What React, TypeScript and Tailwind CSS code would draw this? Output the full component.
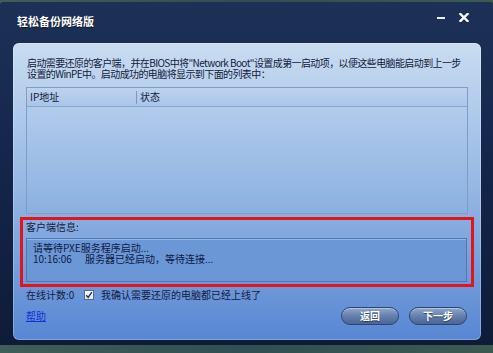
import React from "react";

const font = { fontFamily: '"Noto Sans CJK SC", "Noto Sans", sans-serif' };

function Btn({ children }: { children: React.ReactNode }) {
  return (
    <div className="w-[58px] h-[18px] rounded-full border border-[#2b4472] bg-gradient-to-b from-[#90a7cc] via-[#6580ae] to-[#4a6596] shadow-[inset_0_1px_0_rgba(255,255,255,0.35)] flex items-center justify-center text-white text-[10px] font-bold leading-none [text-shadow:0_1px_1px_rgba(0,0,0,0.5)]">
      {children}
    </div>
  );
}

export default function App() {
  return (
    <div className="w-[493px] h-[353px] overflow-hidden bg-gradient-to-r from-[#3f5e58] via-[#2f4f52] to-[#3c5a50] pt-[2px]" style={font}>
      <div className="h-[343px] rounded-t-[3px] bg-gradient-to-b from-[#1d3156] via-[#14254a] to-[#0f1c38] flex flex-col pl-[13px] pr-[12px] pb-[5px]">
        {/* title bar */}
        <div className="h-[41px] flex justify-between items-start shrink-0">
          <div className="pl-[4px] pt-[12px] text-white text-[11px] font-bold leading-[14px] [text-shadow:0_1px_1px_rgba(0,0,0,0.6)]">
            轻松备份网络版
          </div>
          <div className="flex items-center gap-[14px] pt-[11px] pr-[12px]">
            <div className="w-[8px] h-[2px] bg-[#e8eef8]" />
            <svg width="10" height="9" viewBox="0 0 10 9">
              <path d="M1.5 1 L8.5 8 M8.5 1 L1.5 8" stroke="#ffffff" strokeWidth="2.4" strokeLinecap="square" />
            </svg>
          </div>
        </div>
        {/* panel */}
        <div className="flex-1 rounded-[6px] bg-gradient-to-b from-[#c9dcf1] via-[#93b6e3] to-[#5886d3] px-[13px] pt-[14px] flex flex-col shadow-[inset_0_0_0_1px_rgba(255,255,255,0.25)]">
          <div className="pl-[1px] text-[10px] leading-[11px] text-[#15203a] whitespace-nowrap tracking-[-0.6px]">
            <div>启动需要还原的客户端，并在BIOS中将"Network Boot"设置成第一启动项，以便这些电脑能启动到上一步</div>
            <div>设置的WinPE中。启动成功的电脑将显示到下面的列表中：</div>
          </div>
          {/* list */}
          <div className="mt-[8px] h-[127px] border border-[#7e9cc4] flex flex-col shrink-0">
            <div className="h-[19px] flex items-center border-b border-[#86a5cf] bg-gradient-to-b from-[#bcd3ee] to-[#a9c5e9] text-[10px] text-[#15203a] leading-none shrink-0">
              <div className="w-[110px] pl-[3px] border-r border-[#7c97bd] h-[13px] flex items-center">IP地址</div>
              <div className="pl-[3px]">状态</div>
            </div>
            <div className="flex-1" />
          </div>
          {/* red highlight */}
          <div className="mt-[3px] -mx-[6px] h-[70px] border-[3px] border-[#e4141c] pl-[3px] pr-[4px] pb-[2px] flex flex-col shrink-0">
            <div className="h-[18px] pt-[1px] text-[10px] leading-[12px] text-[#15203a]">客户端信息:</div>
            <div className="h-[44px] border border-[#4f77b0] bg-[#6c97d7] shadow-[inset_0_1px_0_rgba(255,255,255,0.3)] pl-[6px] pt-[3px] text-[10px] leading-[11px] text-[#0d1b44]">
              <div>请等待PXE服务程序启动...</div>
              <div className="flex">
                <span className="w-[52px]">10:16:06</span>
                <span>服务器已经启动，等待连接...</span>
              </div>
            </div>
          </div>
          {/* online count row */}
          <div className="h-[16px] flex items-center text-[10px] text-[#15203a] leading-none shrink-0">
            <span className="w-[58px]">在线计数:0</span>
            <div className="w-[10px] h-[10px] bg-gradient-to-b from-[#ffffff] to-[#dde4ee] border border-[#5a6a86] flex items-center justify-center">
              <svg width="8" height="8" viewBox="0 0 8 8">
                <path d="M1.2 4.2 L3.2 6.4 L6.8 1.2" stroke="#1d2f66" strokeWidth="1.4" fill="none" />
              </svg>
            </div>
            <span className="ml-[7px]">我确认需要还原的电脑都已经上线了</span>
          </div>
          {/* bottom row */}
          <div className="mt-[4px] h-[18px] flex items-center justify-between pr-[1px] shrink-0">
            <span className="text-[10px] leading-none text-[#1530d8] underline">帮助</span>
            <div className="flex gap-[10px]">
              <Btn>返回</Btn>
              <Btn>下一步</Btn>
            </div>
          </div>
        </div>
      </div>
    </div>
  );
}
